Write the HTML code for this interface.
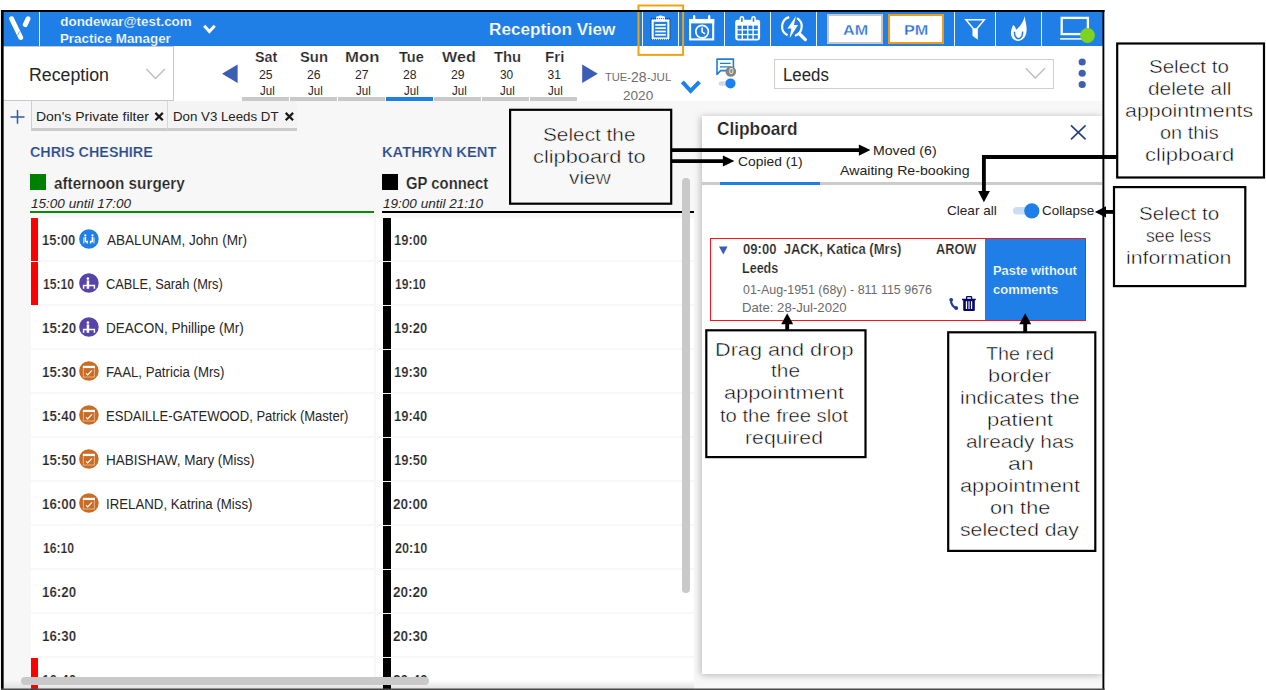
<!DOCTYPE html><html><head><meta charset="utf-8"><title>Reception View</title><style>
*{box-sizing:border-box;margin:0;padding:0}
html,body{width:1266px;height:690px;overflow:hidden;background:#fff}
body{position:relative;font-family:"Liberation Sans",sans-serif}
.a{position:absolute}
.t{position:absolute;white-space:pre;line-height:1;transform-origin:0 0;font-family:"Liberation Sans",sans-serif}
svg{position:absolute;overflow:visible}
#app{position:absolute;left:3px;top:12px;width:1100px;height:677px;background:#f7f7f7;overflow:hidden}
.row{position:absolute;background:#fff;height:42.5px}
.bar{position:absolute;height:43px}
</style></head><body>
<div class="a" style="left:3px;top:12px;width:1100px;height:677px;background:#f7f7f7"></div>
<div class="a" style="left:3px;top:12px;width:1100px;height:34px;background:#1f7fe6"></div>
<div class="t" style="left:60.33px;top:14.91px;font-size:13.4px;color:#fff;font-weight:bold;-webkit-text-stroke:0.22px #1f7fe6;">dondewar@test.com</div>
<div class="t" style="left:59.91px;top:31.66px;font-size:13.4px;color:#fff;font-weight:bold;-webkit-text-stroke:0.22px #1f7fe6;">Practice Manager</div>
<div class="t" style="left:489.43px;top:21.02px;font-size:17.4px;color:#fff;font-weight:bold;transform:scaleX(0.9862);-webkit-text-stroke:0.22px #1f7fe6;">Reception View</div>
<div class="a" style="left:3px;top:46px;width:1100px;height:54.6px;background:#fff"></div>
<div class="a" style="left:38.8px;top:12px;width:1.2px;height:34px;background:#e9f2fd"></div>
<div class="a" style="left:642.1px;top:12px;width:1.2px;height:34px;background:#e9f2fd"></div>
<div class="a" style="left:678.2px;top:12px;width:1.2px;height:34px;background:#e9f2fd"></div>
<div class="a" style="left:724.2px;top:12px;width:1.2px;height:34px;background:#e9f2fd"></div>
<div class="a" style="left:770.2px;top:12px;width:1.2px;height:34px;background:#e9f2fd"></div>
<div class="a" style="left:816.3px;top:12px;width:1.2px;height:34px;background:#e9f2fd"></div>
<div class="a" style="left:954.1px;top:12px;width:1.2px;height:34px;background:#e9f2fd"></div>
<div class="a" style="left:995.1px;top:12px;width:1.2px;height:34px;background:#e9f2fd"></div>
<div class="a" style="left:1040.9px;top:12px;width:1.2px;height:34px;background:#e9f2fd"></div>
<div class="a" style="left:827px;top:13.6px;width:56px;height:30px;background:#fff;border:2.3px solid #c6c6c6"></div>
<div class="a" style="left:888px;top:13.6px;width:56.3px;height:30px;background:#fff;border:2.3px solid #f19a16"></div>
<svg class="a" style="left:0;top:0" width="1266" height="60" viewBox="0 0 1266 60">
<path d="M11.6 18.7 L20.7 37.5" stroke="#fff" stroke-width="4.9" stroke-linecap="round" fill="none"/>
<path d="M28 18.8 L25.3 24.6" stroke="#fff" stroke-width="4.9" stroke-linecap="round" fill="none"/>
<path d="M17.6 35.4 L19.6 31.4" stroke="#1f7fe6" stroke-width="0.6" fill="none"/>
<path d="M204.2 25.7 L209.4 31.5 L214.7 25.7" stroke="#fff" stroke-width="3" fill="none"/>
<rect x="652.6" y="20.6" width="15.8" height="18" fill="none" stroke="#fff" stroke-width="2.2"/>
<rect x="656.2" y="16.2" width="8.8" height="5.4" rx="1.2" fill="#fff"/>
<rect x="658.8" y="15.4" width="3.6" height="2.4" rx="1" fill="#fff"/>
<path d="M655.2 24.9 H665.8" stroke="#fff" stroke-width="1.7"/>
<path d="M655.2 28.2 H665.8" stroke="#fff" stroke-width="1.7"/>
<path d="M655.2 31.5 H665.8" stroke="#fff" stroke-width="1.7"/>
<path d="M655.2 34.8 H665.8" stroke="#fff" stroke-width="1.7"/>
<rect x="650.9" y="18.6" width="19.2" height="20.8" fill="none" stroke="#222" stroke-width="0.8" stroke-dasharray="1 1"/>
<rect x="690.1" y="20" width="23.1" height="19.4" fill="none" stroke="#fff" stroke-width="2.1"/>
<rect x="689.1" y="19" width="25.1" height="4.4" fill="#fff"/>
<path d="M694.2 16.2 V21 M709.2 16.2 V21" stroke="#fff" stroke-width="2.2" stroke-linecap="round"/>
<circle cx="702.1" cy="31.6" r="6.3" fill="none" stroke="#fff" stroke-width="1.7"/>
<path d="M702.1 27.6 V31.8 L705 33.8" fill="none" stroke="#fff" stroke-width="1.6"/>
<rect x="735.2" y="19.8" width="24.9" height="20.6" rx="2.4" fill="#fff"/>
<rect x="739.6" y="16" width="4.6" height="8" rx="2.3" fill="#fff"/>
<rect x="751.2" y="16" width="4.6" height="8" rx="2.3" fill="#fff"/>
<rect x="741.1" y="17.6" width="1.6" height="4.4" rx="0.8" fill="#1f7fe6"/>
<rect x="752.7" y="17.6" width="1.6" height="4.4" rx="0.8" fill="#1f7fe6"/>
<rect x="737.6" y="25.6" width="4" height="3.5" fill="#1f7fe6"/>
<rect x="743.0" y="25.6" width="4" height="3.5" fill="#1f7fe6"/>
<rect x="748.4" y="25.6" width="4" height="3.5" fill="#1f7fe6"/>
<rect x="753.8" y="25.6" width="4" height="3.5" fill="#1f7fe6"/>
<rect x="737.6" y="30.4" width="4" height="3.5" fill="#1f7fe6"/>
<rect x="743.0" y="30.4" width="4" height="3.5" fill="#1f7fe6"/>
<rect x="748.4" y="30.4" width="4" height="3.5" fill="#1f7fe6"/>
<rect x="753.8" y="30.4" width="4" height="3.5" fill="#1f7fe6"/>
<rect x="737.6" y="35.2" width="4" height="3.5" fill="#1f7fe6"/>
<rect x="743.0" y="35.2" width="4" height="3.5" fill="#1f7fe6"/>
<rect x="748.4" y="35.2" width="4" height="3.5" fill="#1f7fe6"/>
<rect x="753.8" y="35.2" width="4" height="3.5" fill="#1f7fe6"/>
<path d="M789.20 17.08 A9.8 9.8 0 0 0 787.60 35.31" fill="none" stroke="#fff" stroke-width="2.2"/>
<path d="M797.09 18.19 A9.8 9.8 0 0 1 794.93 35.82" fill="none" stroke="#fff" stroke-width="2.2"/>
<path d="M799.4 33.8 L805.3 39.6" fill="none" stroke="#fff" stroke-width="3.4" stroke-linecap="round"/>
<path d="M796 16 L787.4 28.6 L791.3 28.6 L789.6 38.2 L798 25 L793.9 25 Z" fill="#fff"/>
<path d="M965.9 19.7 H984.4 L977 28.6 V38.2 L973.2 35.4 V28.6 Z" fill="none" stroke="#fff" stroke-width="1.5" stroke-linejoin="miter"/>
<path d="M973.2 28.2 H977.4 V38.6 L973.2 35.6 Z" fill="#fff"/>
<path d="M1024.8 16.2 C1025 20.5 1026.9 24.5 1026.6 30.6 C1026.3 36.6 1022.8 40.9 1018.5 40.9 C1014 40.9 1010.7 37.6 1010.9 32.8 C1011 29.4 1012.4 27.4 1013 25 C1014.8 26 1015.8 27.6 1016 29.8 C1019.4 27.4 1023 22.4 1024.8 16.2 Z" fill="#fff"/>
<path d="M1014.5 31.8 C1014.3 35.8 1016.2 38.7 1018.6 38.7 C1021 38.7 1022.8 35.8 1022.5 31.6" fill="none" stroke="#1f7fe6" stroke-width="1.5"/>
<rect x="1061.7" y="17.9" width="26.2" height="16.2" fill="none" stroke="#fff" stroke-width="2.3"/>
<path d="M1060 38.9 H1089.2" stroke="#fff" stroke-width="1.5"/>
<circle cx="1087.5" cy="35.5" r="7.4" fill="#7ed321"/>
<rect x="638.5" y="5.5" width="44.6" height="49.4" fill="none" stroke="#f0a30f" stroke-width="2"/>
</svg>
<div class="t" style="left:842.75px;top:22.30px;font-size:15.0px;color:#2a6fd8;font-weight:bold;transform:scaleX(1.0754);-webkit-text-stroke:0.3px #fff;">AM</div>
<div class="t" style="left:903.99px;top:22.30px;font-size:15.0px;color:#2a6fd8;font-weight:bold;transform:scaleX(1.0825);-webkit-text-stroke:0.3px #fff;">PM</div>
<div class="a" style="left:3px;top:46px;width:171px;height:54.6px;background:#fff;border:1px solid #c9c9c9;border-left:none"></div>
<div class="a" style="left:774px;top:58.6px;width:279.6px;height:30.4px;background:#fff;border:1px solid #cfcfcf"></div>
<div class="a" style="left:242px;top:97.4px;width:47.4px;height:3.2px;background:#c9c9c9"></div>
<div class="a" style="left:290px;top:97.4px;width:47.4px;height:3.2px;background:#c9c9c9"></div>
<div class="a" style="left:338px;top:97.4px;width:47.4px;height:3.2px;background:#c9c9c9"></div>
<div class="a" style="left:386px;top:97.4px;width:47.4px;height:3.2px;background:#1f7fe6"></div>
<div class="a" style="left:434px;top:97.4px;width:47.4px;height:3.2px;background:#c9c9c9"></div>
<div class="a" style="left:482px;top:97.4px;width:47.4px;height:3.2px;background:#c9c9c9"></div>
<div class="a" style="left:530px;top:97.4px;width:47.4px;height:3.2px;background:#c9c9c9"></div>
<svg class="a" style="left:0;top:0" width="1266" height="110" viewBox="0 0 1266 110">
<path d="M146.3 69 L155.6 78.6 L164.9 69" stroke="#bdbdbd" stroke-width="1.4" fill="none"/>
<path d="M1025.7 68.3 L1035.3 78 L1044.9 68.3" stroke="#bdbdbd" stroke-width="1.4" fill="none"/>
<path d="M237.6 64.5 L237.6 83 L222 73.7 Z" fill="#3d5cb4"/>
<path d="M582.2 64.5 L582.2 83 L597.8 73.7 Z" fill="#3d5cb4"/>
<path d="M682.3 81.8 L690.6 90.9 L699.4 81.8" stroke="#1b80f0" stroke-width="4" fill="none"/>
<circle cx="1082.2" cy="62" r="3.6" fill="#3f5fb2"/>
<circle cx="1082.2" cy="73.25" r="3.6" fill="#3f5fb2"/>
<circle cx="1082.2" cy="84.5" r="3.6" fill="#3f5fb2"/>
<path d="M717 59.1 H733.4 V70.6 H720.6 L717 74.4 Z" fill="none" stroke="#1f7fd6" stroke-width="1.6" stroke-linejoin="round"/>
<path d="M720 63.4 H730.6 M720 66.9 H730.6" stroke="#1f7fd6" stroke-width="1.3"/>
<circle cx="730.8" cy="71.5" r="5.3" fill="#858585"/>
<rect x="718.6" y="81.3" width="10" height="4.5" rx="2.2" fill="#d3d9e6"/>
<circle cx="730.5" cy="83.4" r="5" fill="#1b80f0"/>
</svg>
<div class="t" style="left:28.61px;top:66.01px;font-size:18.0px;color:#262626;transform:scaleX(0.9856);">Reception</div>
<div class="t" style="left:255.28px;top:49.81px;font-size:14.4px;color:#242424;font-weight:bold;transform:scaleX(0.9949);-webkit-text-stroke:0.22px #fff;">Sat</div>
<div class="t" style="left:259.33px;top:68.59px;font-size:12.0px;color:#262626;transform:scaleX(1.0164);">25</div>
<div class="t" style="left:259.82px;top:84.84px;font-size:12.0px;color:#262626;transform:scaleX(0.9574);">Jul</div>
<div class="t" style="left:300.27px;top:49.81px;font-size:14.4px;color:#242424;font-weight:bold;transform:scaleX(1.0276);-webkit-text-stroke:0.22px #fff;">Sun</div>
<div class="t" style="left:307.33px;top:68.59px;font-size:12.0px;color:#262626;transform:scaleX(1.0164);">26</div>
<div class="t" style="left:307.82px;top:84.84px;font-size:12.0px;color:#262626;transform:scaleX(0.9574);">Jul</div>
<div class="t" style="left:344.96px;top:49.81px;font-size:14.4px;color:#242424;font-weight:bold;transform:scaleX(1.1611);-webkit-text-stroke:0.22px #fff;">Mon</div>
<div class="t" style="left:355.33px;top:68.59px;font-size:12.0px;color:#262626;transform:scaleX(1.0164);">27</div>
<div class="t" style="left:355.82px;top:84.84px;font-size:12.0px;color:#262626;transform:scaleX(0.9574);">Jul</div>
<div class="t" style="left:398.50px;top:49.81px;font-size:14.4px;color:#242424;font-weight:bold;transform:scaleX(1.0135);-webkit-text-stroke:0.22px #fff;">Tue</div>
<div class="t" style="left:403.33px;top:68.59px;font-size:12.0px;color:#262626;transform:scaleX(1.0164);">28</div>
<div class="t" style="left:403.82px;top:84.84px;font-size:12.0px;color:#262626;transform:scaleX(0.9574);">Jul</div>
<div class="t" style="left:442.00px;top:49.81px;font-size:14.4px;color:#242424;font-weight:bold;transform:scaleX(1.1210);-webkit-text-stroke:0.22px #fff;">Wed</div>
<div class="t" style="left:451.33px;top:68.59px;font-size:12.0px;color:#262626;transform:scaleX(1.0164);">29</div>
<div class="t" style="left:451.82px;top:84.84px;font-size:12.0px;color:#262626;transform:scaleX(0.9574);">Jul</div>
<div class="t" style="left:493.50px;top:49.81px;font-size:14.4px;color:#242424;font-weight:bold;transform:scaleX(1.0307);-webkit-text-stroke:0.22px #fff;">Thu</div>
<div class="t" style="left:499.53px;top:68.59px;font-size:12.0px;color:#262626;transform:scaleX(0.9863);">30</div>
<div class="t" style="left:499.82px;top:84.84px;font-size:12.0px;color:#262626;transform:scaleX(0.9574);">Jul</div>
<div class="t" style="left:545.05px;top:49.81px;font-size:14.4px;color:#242424;font-weight:bold;transform:scaleX(1.0511);-webkit-text-stroke:0.22px #fff;">Fri</div>
<div class="t" style="left:547.52px;top:68.59px;font-size:12.0px;color:#262626;">31</div>
<div class="t" style="left:547.82px;top:84.84px;font-size:12.0px;color:#262626;transform:scaleX(0.9574);">Jul</div>
<div class="t" style="left:782.69px;top:66.01px;font-size:18.0px;color:#262626;transform:scaleX(0.9347);">Leeds</div>
<div class="t" style="left:622.86px;top:89.27px;font-size:13.5px;color:#6e6e6e;transform:scaleX(1.0047);">2020</div>
<div class="t" style="left:605.23px;top:73.07px;font-size:10.2px;color:#6e6e6e;transform:scaleX(1.0916);">TUE-</div>
<div class="t" style="left:631.15px;top:69.85px;font-size:14.0px;color:#6e6e6e;transform:scaleX(0.9966);">28</div>
<div class="t" style="left:646.74px;top:73.07px;font-size:10.2px;color:#6e6e6e;transform:scaleX(1.1306);">-JUL</div>
<div class="t" style="left:728.65px;top:67.29px;font-size:8.4px;color:#fff;transform:scaleX(0.9524);">0</div>
<div class="a" style="left:30.5px;top:100.6px;width:137.3px;height:30.4px;background:#f4f4f4;border-left:1px solid #d0d0d0;border-right:1px solid #d8d8d8;border-bottom:3px solid #cbcbcb"></div>
<div class="a" style="left:167.8px;top:100.6px;width:129.4px;height:30.4px;background:#f4f4f4;border-bottom:3px solid #cbcbcb"></div>
<svg class="a" style="left:0;top:0" width="400" height="140" viewBox="0 0 400 140">
<path d="M10.5 116.9 H24.5 M17.5 110 V123.8" stroke="#2f5aa8" stroke-width="1.5" fill="none"/>
<path d="M155.4 112.9 L162.79999999999998 120.3 M162.79999999999998 112.9 L155.4 120.3" stroke="#1a1a1a" stroke-width="2.2" fill="none"/>
<path d="M285.7 112.9 L293.09999999999997 120.3 M293.09999999999997 112.9 L285.7 120.3" stroke="#1a1a1a" stroke-width="2.2" fill="none"/>
</svg>
<div class="t" style="left:35.91px;top:110.25px;font-size:13.0px;color:#222;transform:scaleX(1.0746);">Don&#x27;s Private filter</div>
<div class="t" style="left:172.71px;top:110.25px;font-size:13.0px;color:#222;transform:scaleX(1.0211);">Don V3 Leeds DT</div>
<div class="t" style="left:30.05px;top:143.96px;font-size:15.4px;color:#264a8e;font-weight:bold;transform:scaleX(0.9321);-webkit-text-stroke:0.22px #f7f7f7;">CHRIS CHESHIRE</div>
<div class="t" style="left:382.08px;top:143.96px;font-size:15.4px;color:#264a8e;font-weight:bold;transform:scaleX(0.9555);-webkit-text-stroke:0.22px #f7f7f7;">KATHRYN KENT</div>
<div class="t" style="left:53.96px;top:175.12px;font-size:16.4px;color:#242424;font-weight:bold;transform:scaleX(0.9313);-webkit-text-stroke:0.22px #f7f7f7;">afternoon surgery</div>
<div class="t" style="left:406.04px;top:175.12px;font-size:16.4px;color:#242424;font-weight:bold;transform:scaleX(0.9057);-webkit-text-stroke:0.22px #f7f7f7;">GP connect</div>
<div class="t" style="left:31.04px;top:196.82px;font-size:13.5px;color:#262626;font-style:italic;transform:scaleX(1.0029);">15:00 until 17:00</div>
<div class="t" style="left:383.29px;top:196.82px;font-size:13.5px;color:#262626;font-style:italic;transform:scaleX(1.0029);">19:00 until 21:10</div>
<div class="a" style="left:30px;top:174px;width:16.3px;height:16px;background:#008000"></div>
<div class="a" style="left:382.3px;top:174px;width:15.8px;height:16px;background:#000"></div>
<div class="a" style="left:30px;top:210.5px;width:344px;height:2.4px;background:#0a8a0a"></div>
<div class="a" style="left:382.3px;top:210.7px;width:312.2px;height:2.4px;background:#000"></div>
<div class="row" style="left:31px;top:217.6px;width:342.5px"></div>
<div class="row" style="left:375.5px;top:217.6px;width:318.5px"></div>
<div class="bar" style="left:383px;top:217.6px;width:7.5px;background:#000"></div>
<div class="row" style="left:31px;top:261.6px;width:342.5px"></div>
<div class="row" style="left:375.5px;top:261.6px;width:318.5px"></div>
<div class="bar" style="left:383px;top:261.6px;width:7.5px;background:#000"></div>
<div class="row" style="left:31px;top:305.6px;width:342.5px"></div>
<div class="row" style="left:375.5px;top:305.6px;width:318.5px"></div>
<div class="bar" style="left:383px;top:305.6px;width:7.5px;background:#000"></div>
<div class="row" style="left:31px;top:349.6px;width:342.5px"></div>
<div class="row" style="left:375.5px;top:349.6px;width:318.5px"></div>
<div class="bar" style="left:383px;top:349.6px;width:7.5px;background:#000"></div>
<div class="row" style="left:31px;top:393.6px;width:342.5px"></div>
<div class="row" style="left:375.5px;top:393.6px;width:318.5px"></div>
<div class="bar" style="left:383px;top:393.6px;width:7.5px;background:#000"></div>
<div class="row" style="left:31px;top:437.6px;width:342.5px"></div>
<div class="row" style="left:375.5px;top:437.6px;width:318.5px"></div>
<div class="bar" style="left:383px;top:437.6px;width:7.5px;background:#000"></div>
<div class="row" style="left:31px;top:481.6px;width:342.5px"></div>
<div class="row" style="left:375.5px;top:481.6px;width:318.5px"></div>
<div class="bar" style="left:383px;top:481.6px;width:7.5px;background:#000"></div>
<div class="row" style="left:31px;top:525.6px;width:342.5px"></div>
<div class="row" style="left:375.5px;top:525.6px;width:318.5px"></div>
<div class="bar" style="left:383px;top:525.6px;width:7.5px;background:#000"></div>
<div class="row" style="left:31px;top:569.6px;width:342.5px"></div>
<div class="row" style="left:375.5px;top:569.6px;width:318.5px"></div>
<div class="bar" style="left:383px;top:569.6px;width:7.5px;background:#000"></div>
<div class="row" style="left:31px;top:613.6px;width:342.5px"></div>
<div class="row" style="left:375.5px;top:613.6px;width:318.5px"></div>
<div class="bar" style="left:383px;top:613.6px;width:7.5px;background:#000"></div>
<div class="row" style="left:31px;top:657.6px;width:342.5px"></div>
<div class="row" style="left:375.5px;top:657.6px;width:318.5px"></div>
<div class="bar" style="left:383px;top:657.6px;width:7.5px;background:#000"></div>
<div class="bar" style="left:31px;top:217.6px;width:7.4px;background:#fe0000"></div>
<div class="bar" style="left:31px;top:261.6px;width:7.4px;background:#fe0000"></div>
<div class="bar" style="left:31px;top:657.6px;width:7.4px;background:#fe0000"></div>
<svg class="a" style="left:0;top:0" width="400" height="690" viewBox="0 0 400 690">
<circle cx="88.9" cy="239" r="9.8" fill="#1f7fe6"/>
<circle cx="85.30" cy="235.4" r="1.1" fill="#fff"/>
<path d="M85.40 237 V241.4 H87.20 V243.4" fill="none" stroke="#fff" stroke-width="1.5"/>
<path d="M83.80 237.5 V243.4" fill="none" stroke="#fff" stroke-width="0.9"/>
<circle cx="92.50" cy="235.4" r="1.1" fill="#fff"/>
<path d="M92.40 237 V241.4 H90.60 V243.4" fill="none" stroke="#fff" stroke-width="1.5"/>
<path d="M94.00 237.5 V243.4" fill="none" stroke="#fff" stroke-width="0.9"/>
<circle cx="88.9" cy="283" r="9.8" fill="#5844a8"/>
<circle cx="87.9" cy="278.6" r="1.3" fill="#fff"/>
<rect x="86.7" y="280.4" width="2.5" height="8.4" fill="#fff"/>
<path d="M82.9 285.6 H95.10000000000001 M83.60000000000001 285.6 V288.8 M94.4 285.6 V288.8" fill="none" stroke="#fff" stroke-width="1.5"/>
<circle cx="88.9" cy="327" r="9.8" fill="#5844a8"/>
<circle cx="87.9" cy="322.6" r="1.3" fill="#fff"/>
<rect x="86.7" y="324.4" width="2.5" height="8.4" fill="#fff"/>
<path d="M82.9 329.6 H95.10000000000001 M83.60000000000001 329.6 V332.8 M94.4 329.6 V332.8" fill="none" stroke="#fff" stroke-width="1.5"/>
<circle cx="88.9" cy="371" r="9.8" fill="#cb6c25"/>
<rect x="82.9" y="365.8" width="12" height="2.2" fill="#fff"/>
<rect x="83.4" y="367.6" width="11" height="9.4" fill="none" stroke="#fff" stroke-opacity="0.45" stroke-width="1.1"/>
<path d="M86.10000000000001 373.4 L87.7 375 L91.9 370.4" fill="none" stroke="#fff" stroke-width="1.2"/>
<circle cx="88.9" cy="415" r="9.8" fill="#cb6c25"/>
<rect x="82.9" y="409.8" width="12" height="2.2" fill="#fff"/>
<rect x="83.4" y="411.6" width="11" height="9.4" fill="none" stroke="#fff" stroke-opacity="0.45" stroke-width="1.1"/>
<path d="M86.10000000000001 417.4 L87.7 419 L91.9 414.4" fill="none" stroke="#fff" stroke-width="1.2"/>
<circle cx="88.9" cy="459" r="9.8" fill="#cb6c25"/>
<rect x="82.9" y="453.8" width="12" height="2.2" fill="#fff"/>
<rect x="83.4" y="455.6" width="11" height="9.4" fill="none" stroke="#fff" stroke-opacity="0.45" stroke-width="1.1"/>
<path d="M86.10000000000001 461.4 L87.7 463 L91.9 458.4" fill="none" stroke="#fff" stroke-width="1.2"/>
<circle cx="88.9" cy="503" r="9.8" fill="#cb6c25"/>
<rect x="82.9" y="497.8" width="12" height="2.2" fill="#fff"/>
<rect x="83.4" y="499.6" width="11" height="9.4" fill="none" stroke="#fff" stroke-opacity="0.45" stroke-width="1.1"/>
<path d="M86.10000000000001 505.4 L87.7 507 L91.9 502.4" fill="none" stroke="#fff" stroke-width="1.2"/>
</svg>
<div class="t" style="left:41.59px;top:233.68px;font-size:13.9px;color:#242424;font-weight:bold;transform:scaleX(0.9350);-webkit-text-stroke:0.22px #fff;">15:00</div>
<div class="t" style="left:393.99px;top:233.68px;font-size:13.9px;color:#242424;font-weight:bold;transform:scaleX(0.9320);-webkit-text-stroke:0.22px #fff;">19:00</div>
<div class="t" style="left:43.04px;top:277.68px;font-size:13.9px;color:#242424;font-weight:bold;transform:scaleX(0.8763);-webkit-text-stroke:0.22px #fff;">15:10</div>
<div class="t" style="left:395.25px;top:277.68px;font-size:13.9px;color:#242424;font-weight:bold;transform:scaleX(0.8676);-webkit-text-stroke:0.22px #fff;">19:10</div>
<div class="t" style="left:41.67px;top:321.68px;font-size:13.9px;color:#242424;font-weight:bold;transform:scaleX(0.9584);-webkit-text-stroke:0.22px #fff;">15:20</div>
<div class="t" style="left:393.99px;top:321.68px;font-size:13.9px;color:#242424;font-weight:bold;transform:scaleX(0.9320);-webkit-text-stroke:0.22px #fff;">19:20</div>
<div class="t" style="left:41.67px;top:365.68px;font-size:13.9px;color:#242424;font-weight:bold;transform:scaleX(0.9584);-webkit-text-stroke:0.22px #fff;">15:30</div>
<div class="t" style="left:393.99px;top:365.68px;font-size:13.9px;color:#242424;font-weight:bold;transform:scaleX(0.9320);-webkit-text-stroke:0.22px #fff;">19:30</div>
<div class="t" style="left:41.67px;top:409.68px;font-size:13.9px;color:#242424;font-weight:bold;transform:scaleX(0.9584);-webkit-text-stroke:0.22px #fff;">15:40</div>
<div class="t" style="left:393.99px;top:409.68px;font-size:13.9px;color:#242424;font-weight:bold;transform:scaleX(0.9320);-webkit-text-stroke:0.22px #fff;">19:40</div>
<div class="t" style="left:41.67px;top:453.68px;font-size:13.9px;color:#242424;font-weight:bold;transform:scaleX(0.9584);-webkit-text-stroke:0.22px #fff;">15:50</div>
<div class="t" style="left:393.99px;top:453.68px;font-size:13.9px;color:#242424;font-weight:bold;transform:scaleX(0.9320);-webkit-text-stroke:0.22px #fff;">19:50</div>
<div class="t" style="left:41.67px;top:497.68px;font-size:13.9px;color:#242424;font-weight:bold;transform:scaleX(0.9584);-webkit-text-stroke:0.22px #fff;">16:00</div>
<div class="t" style="left:393.08px;top:497.68px;font-size:13.9px;color:#242424;font-weight:bold;transform:scaleX(0.9753);-webkit-text-stroke:0.22px #fff;">20:00</div>
<div class="t" style="left:43.04px;top:541.68px;font-size:13.9px;color:#242424;font-weight:bold;transform:scaleX(0.8763);-webkit-text-stroke:0.22px #fff;">16:10</div>
<div class="t" style="left:394.60px;top:541.68px;font-size:13.9px;color:#242424;font-weight:bold;transform:scaleX(0.9116);-webkit-text-stroke:0.22px #fff;">20:10</div>
<div class="t" style="left:41.67px;top:585.68px;font-size:13.9px;color:#242424;font-weight:bold;transform:scaleX(0.9584);-webkit-text-stroke:0.22px #fff;">16:20</div>
<div class="t" style="left:393.08px;top:585.68px;font-size:13.9px;color:#242424;font-weight:bold;transform:scaleX(0.9753);-webkit-text-stroke:0.22px #fff;">20:20</div>
<div class="t" style="left:41.67px;top:629.68px;font-size:13.9px;color:#242424;font-weight:bold;transform:scaleX(0.9584);-webkit-text-stroke:0.22px #fff;">16:30</div>
<div class="t" style="left:393.08px;top:629.68px;font-size:13.9px;color:#242424;font-weight:bold;transform:scaleX(0.9753);-webkit-text-stroke:0.22px #fff;">20:30</div>
<div class="t" style="left:41.67px;top:673.68px;font-size:13.9px;color:#242424;font-weight:bold;transform:scaleX(0.9584);-webkit-text-stroke:0.22px #fff;">16:40</div>
<div class="t" style="left:393.08px;top:673.68px;font-size:13.9px;color:#242424;font-weight:bold;transform:scaleX(0.9753);-webkit-text-stroke:0.22px #fff;">20:40</div>
<div class="t" style="left:107.00px;top:233.15px;font-size:14.0px;color:#262626;transform:scaleX(0.9672);">ABALUNAM, John (Mr)</div>
<div class="t" style="left:106.40px;top:277.15px;font-size:14.0px;color:#262626;transform:scaleX(0.9152);">CABLE, Sarah (Mrs)</div>
<div class="t" style="left:105.94px;top:321.15px;font-size:14.0px;color:#262626;transform:scaleX(0.9677);">DEACON, Phillipe (Mr)</div>
<div class="t" style="left:105.97px;top:365.15px;font-size:14.0px;color:#262626;transform:scaleX(0.9447);">FAAL, Patricia (Mrs)</div>
<div class="t" style="left:105.98px;top:409.15px;font-size:14.0px;color:#262626;transform:scaleX(0.9311);">ESDAILLE-GATEWOOD, Patrick (Master)</div>
<div class="t" style="left:105.95px;top:453.15px;font-size:14.0px;color:#262626;transform:scaleX(0.9630);">HABISHAW, Mary (Miss)</div>
<div class="t" style="left:105.97px;top:497.15px;font-size:14.0px;color:#262626;transform:scaleX(0.9458);">IRELAND, Katrina (Miss)</div>
<div class="a" style="left:682.2px;top:178.2px;width:8px;height:414.4px;border-radius:4px;background:#c9c9c9"></div>
<div class="a" style="left:3px;top:680px;width:691px;height:9px;background:linear-gradient(rgba(225,225,225,0),#e0e0e0)"></div>
<div class="a" style="left:31px;top:680px;width:7.4px;height:9px;background:#fe0000"></div><div class="a" style="left:383px;top:680px;width:7.5px;height:9px;background:#000"></div>
<div class="a" style="left:21.3px;top:677.2px;width:407.8px;height:7.8px;border-radius:4px;background:#c9c9c9"></div>
<div class="a" style="left:702px;top:116.2px;width:400px;height:558px;background:#fff;box-shadow:-1px 1px 7px rgba(0,0,0,0.28)"></div>
<div class="a" style="left:702px;top:182.1px;width:400px;height:3px;background:#cbcbcb"></div>
<div class="a" style="left:719.5px;top:182.1px;width:100.6px;height:3px;background:#1f7fe6"></div>
<div class="a" style="left:710.2px;top:238.2px;width:375.6px;height:83.2px;border:1.2px solid #f8141a;background:#fff"></div>
<div class="a" style="left:985px;top:239.1px;width:100px;height:81.2px;background:#1f7fe6"></div>
<svg class="a" style="left:0;top:0" width="1266" height="400" viewBox="0 0 1266 400">
<path d="M1071 125.4 L1085.6 139.4 M1085.6 125.4 L1071 139.4" stroke="#23407e" stroke-width="1.6" fill="none"/>
<path d="M719 246.6 L727.6 246.6 L723.3 254.6 Z" fill="#3d5cb4"/>
<rect x="1013" y="207" width="22" height="7.6" rx="3.8" fill="#c9ddf5"/>
<circle cx="1031.8" cy="210.8" r="7.6" fill="#1f7fe6"/>
<path d="M951 299.6 C950.6 303.6 953.2 307.4 956.6 308.4" fill="none" stroke="#1f3f8a" stroke-width="2.1" stroke-linecap="round"/>
<circle cx="951.2" cy="299.8" r="1.9" fill="#1f3f8a"/><circle cx="956.2" cy="308" r="1.9" fill="#1f3f8a"/>
<path d="M962 299.5 H975.8" stroke="#06066b" stroke-width="1.5"/>
<path d="M966.6 299 V297 Q966.6 296.6 967.2 296.6 H971 Q971.6 296.6 971.6 297 V299" fill="none" stroke="#06066b" stroke-width="1.3"/>
<path d="M963.2 300 H974.8 V310 Q974.8 311.1 973.6 311.1 H964.4 Q963.2 311.1 963.2 310 Z" fill="#06066b"/>
<rect x="965.8" y="301.2" width="1.3" height="7.8" fill="#fff"/><rect x="970.9" y="301.2" width="1.3" height="7.8" fill="#fff"/><rect x="968.2" y="301.2" width="1.6" height="7.8" fill="#aab0cf"/>
</svg>
<div class="t" style="left:717.46px;top:120.12px;font-size:18.4px;color:#242424;font-weight:bold;transform:scaleX(0.9392);-webkit-text-stroke:0.22px #fff;">Clipboard</div>
<div class="t" style="left:872.90px;top:143.57px;font-size:13.5px;color:#222;transform:scaleX(1.0463);">Moved (6)</div>
<div class="t" style="left:737.60px;top:154.82px;font-size:13.5px;color:#222;transform:scaleX(1.0251);">Copied (1)</div>
<div class="t" style="left:840.20px;top:164.37px;font-size:13.5px;color:#222;transform:scaleX(1.0479);">Awaiting Re-booking</div>
<div class="t" style="left:946.66px;top:204.32px;font-size:13.5px;color:#222;transform:scaleX(1.0043);">Clear all</div>
<div class="t" style="left:1041.87px;top:204.32px;font-size:13.5px;color:#222;transform:scaleX(0.9932);">Collapse</div>
<div class="t" style="left:742.84px;top:242.93px;font-size:13.9px;color:#242424;font-weight:bold;transform:scaleX(0.9405);-webkit-text-stroke:0.22px #fff;">09:00  JACK, Katica (Mrs)</div>
<div class="t" style="left:935.55px;top:242.93px;font-size:13.9px;color:#242424;font-weight:bold;transform:scaleX(0.9165);-webkit-text-stroke:0.22px #fff;">AROW</div>
<div class="t" style="left:742.47px;top:261.68px;font-size:13.9px;color:#242424;font-weight:bold;transform:scaleX(0.9034);-webkit-text-stroke:0.22px #fff;">Leeds</div>
<div class="t" style="left:742.86px;top:283.00px;font-size:13.0px;color:#6a6a6a;transform:scaleX(0.9562);">01-Aug-1951 (68y) - 811 115 9676</div>
<div class="t" style="left:742.22px;top:301.00px;font-size:13.0px;color:#6a6a6a;transform:scaleX(1.0123);">Date: 28-Jul-2020</div>
<div class="t" style="left:992.94px;top:264.41px;font-size:13.4px;color:#fff;font-weight:bold;transform:scaleX(0.9628);-webkit-text-stroke:0.22px #1f7fe6;">Paste without</div>
<div class="t" style="left:993.34px;top:282.66px;font-size:13.4px;color:#fff;font-weight:bold;transform:scaleX(0.9726);-webkit-text-stroke:0.22px #1f7fe6;">comments</div>
<svg class="a" style="left:0;top:0" width="1266" height="690" viewBox="0 0 1266 690"><path d="M1 11 H1104.6" stroke="#000" stroke-width="2"/><path d="M2.3 10 V690" stroke="#000" stroke-width="2.7"/><path d="M1103.4 10 V690" stroke="#000" stroke-width="1.9"/><path d="M1 689.3 H1104.6" stroke="#4a4a4a" stroke-width="1.4"/></svg>
<svg class="a" style="left:0;top:0" width="1266" height="690" viewBox="0 0 1266 690">
<path d="M671 150.05 H860" stroke="#000" fill="none" stroke-width="3.85"/>
<path d="M858.9 144.4 L870.4 150.05 L858.9 155.75 Z" fill="#000"/>
<path d="M671 161.1 H724" stroke="#000" fill="none" stroke-width="3.85"/>
<path d="M722.9 155.4 L734.4 161 L722.9 166.6 Z" fill="#000"/>
<path d="M1118 156.95 H983.9 V192" stroke="#000" fill="none" stroke-width="3.85"/>
<path d="M978.1 191 L989.9 191 L983.9 202.2 Z" fill="#000"/>
<path d="M1114 211.9 H1105" stroke="#000" fill="none" stroke-width="3.85"/>
<path d="M1106 206.2 L1106 217.6 L1094.9 211.9 Z" fill="#000"/>
<path d="M787.2 331 V323" stroke="#000" fill="none" stroke-width="3.85"/>
<path d="M781.2 324.2 L793.2 324.2 L787.2 313.2 Z" fill="#000"/>
<path d="M1025.2 333 V323" stroke="#000" fill="none" stroke-width="3.85"/>
<path d="M1019.2 324.2 L1031.2 324.2 L1025.2 313.2 Z" fill="#000"/>
<rect x="510.10" y="109.80" width="161.10" height="93.90" fill="#f8f8f8" stroke="#000" stroke-width="2.2"/>
<rect x="1117.20" y="43.50" width="146.80" height="134.00" fill="#fff" stroke="#000" stroke-width="2.2"/>
<rect x="1114.00" y="187.10" width="131.30" height="99.00" fill="#fff" stroke="#000" stroke-width="2.2"/>
<rect x="706.30" y="330.30" width="159.20" height="126.80" fill="#fff" stroke="#000" stroke-width="2.2"/>
<rect x="948.20" y="332.30" width="147.10" height="218.60" fill="#fff" stroke="#000" stroke-width="2.2"/>
</svg>
<div class="t" style="left:543.05px;top:126.53px;font-size:17.8px;color:#000;transform:scaleX(1.1697);-webkit-text-stroke:0.45px #f8f8f8;">Select the</div>
<div class="t" style="left:532.52px;top:148.83px;font-size:17.8px;color:#000;transform:scaleX(1.2265);-webkit-text-stroke:0.45px #f8f8f8;">clipboard to</div>
<div class="t" style="left:569.00px;top:170.03px;font-size:17.8px;color:#000;transform:scaleX(1.1723);-webkit-text-stroke:0.45px #f8f8f8;">view</div>
<div class="t" style="left:1149.36px;top:58.53px;font-size:17.8px;color:#000;transform:scaleX(1.1547);-webkit-text-stroke:0.45px #fff;">Select to</div>
<div class="t" style="left:1148.35px;top:80.53px;font-size:17.8px;color:#000;transform:scaleX(1.1723);-webkit-text-stroke:0.45px #fff;">delete all</div>
<div class="t" style="left:1125.33px;top:102.53px;font-size:17.8px;color:#000;transform:scaleX(1.2009);-webkit-text-stroke:0.45px #fff;">appointments</div>
<div class="t" style="left:1159.88px;top:124.53px;font-size:17.8px;color:#000;transform:scaleX(1.1202);-webkit-text-stroke:0.45px #fff;">on this</div>
<div class="t" style="left:1144.81px;top:146.53px;font-size:17.8px;color:#000;transform:scaleX(1.2380);-webkit-text-stroke:0.45px #fff;">clipboard</div>
<div class="t" style="left:1138.61px;top:205.78px;font-size:17.8px;color:#000;transform:scaleX(1.1584);-webkit-text-stroke:0.45px #fff;">Select to</div>
<div class="t" style="left:1145.97px;top:228.03px;font-size:17.8px;color:#000;transform:scaleX(0.9967);-webkit-text-stroke:0.45px #fff;">see less</div>
<div class="t" style="left:1125.67px;top:250.03px;font-size:17.8px;color:#000;transform:scaleX(1.1985);-webkit-text-stroke:0.45px #fff;">information</div>
<div class="t" style="left:714.81px;top:342.03px;font-size:17.8px;color:#000;transform:scaleX(1.2177);-webkit-text-stroke:0.45px #fff;">Drag and drop</div>
<div class="t" style="left:770.75px;top:363.28px;font-size:17.8px;color:#000;transform:scaleX(1.1760);-webkit-text-stroke:0.45px #fff;">the</div>
<div class="t" style="left:724.32px;top:385.28px;font-size:17.8px;color:#000;transform:scaleX(1.2260);-webkit-text-stroke:0.45px #fff;">appointment</div>
<div class="t" style="left:720.00px;top:407.53px;font-size:17.8px;color:#000;transform:scaleX(1.1364);-webkit-text-stroke:0.45px #fff;">to the free slot</div>
<div class="t" style="left:745.17px;top:429.53px;font-size:17.8px;color:#000;transform:scaleX(1.1947);-webkit-text-stroke:0.45px #fff;">required</div>
<div class="t" style="left:986.44px;top:345.78px;font-size:17.8px;color:#000;transform:scaleX(1.1113);-webkit-text-stroke:0.45px #fff;">The red</div>
<div class="t" style="left:987.88px;top:367.78px;font-size:17.8px;color:#000;transform:scaleX(1.2288);-webkit-text-stroke:0.45px #fff;">border</div>
<div class="t" style="left:959.67px;top:389.53px;font-size:17.8px;color:#000;transform:scaleX(1.1977);-webkit-text-stroke:0.45px #fff;">indicates the</div>
<div class="t" style="left:986.62px;top:411.53px;font-size:17.8px;color:#000;transform:scaleX(1.2407);-webkit-text-stroke:0.45px #fff;">patient</div>
<div class="t" style="left:966.10px;top:433.78px;font-size:17.8px;color:#000;transform:scaleX(1.1742);-webkit-text-stroke:0.45px #fff;">already has</div>
<div class="t" style="left:1008.03px;top:455.78px;font-size:17.8px;color:#000;transform:scaleX(1.3019);-webkit-text-stroke:0.45px #fff;">an</div>
<div class="t" style="left:959.82px;top:477.78px;font-size:17.8px;color:#000;transform:scaleX(1.2260);-webkit-text-stroke:0.45px #fff;">appointment</div>
<div class="t" style="left:989.82px;top:499.78px;font-size:17.8px;color:#000;transform:scaleX(1.2186);-webkit-text-stroke:0.45px #fff;">on the</div>
<div class="t" style="left:960.17px;top:521.78px;font-size:17.8px;color:#000;transform:scaleX(1.1915);-webkit-text-stroke:0.45px #fff;">selected day</div>
</body></html>
